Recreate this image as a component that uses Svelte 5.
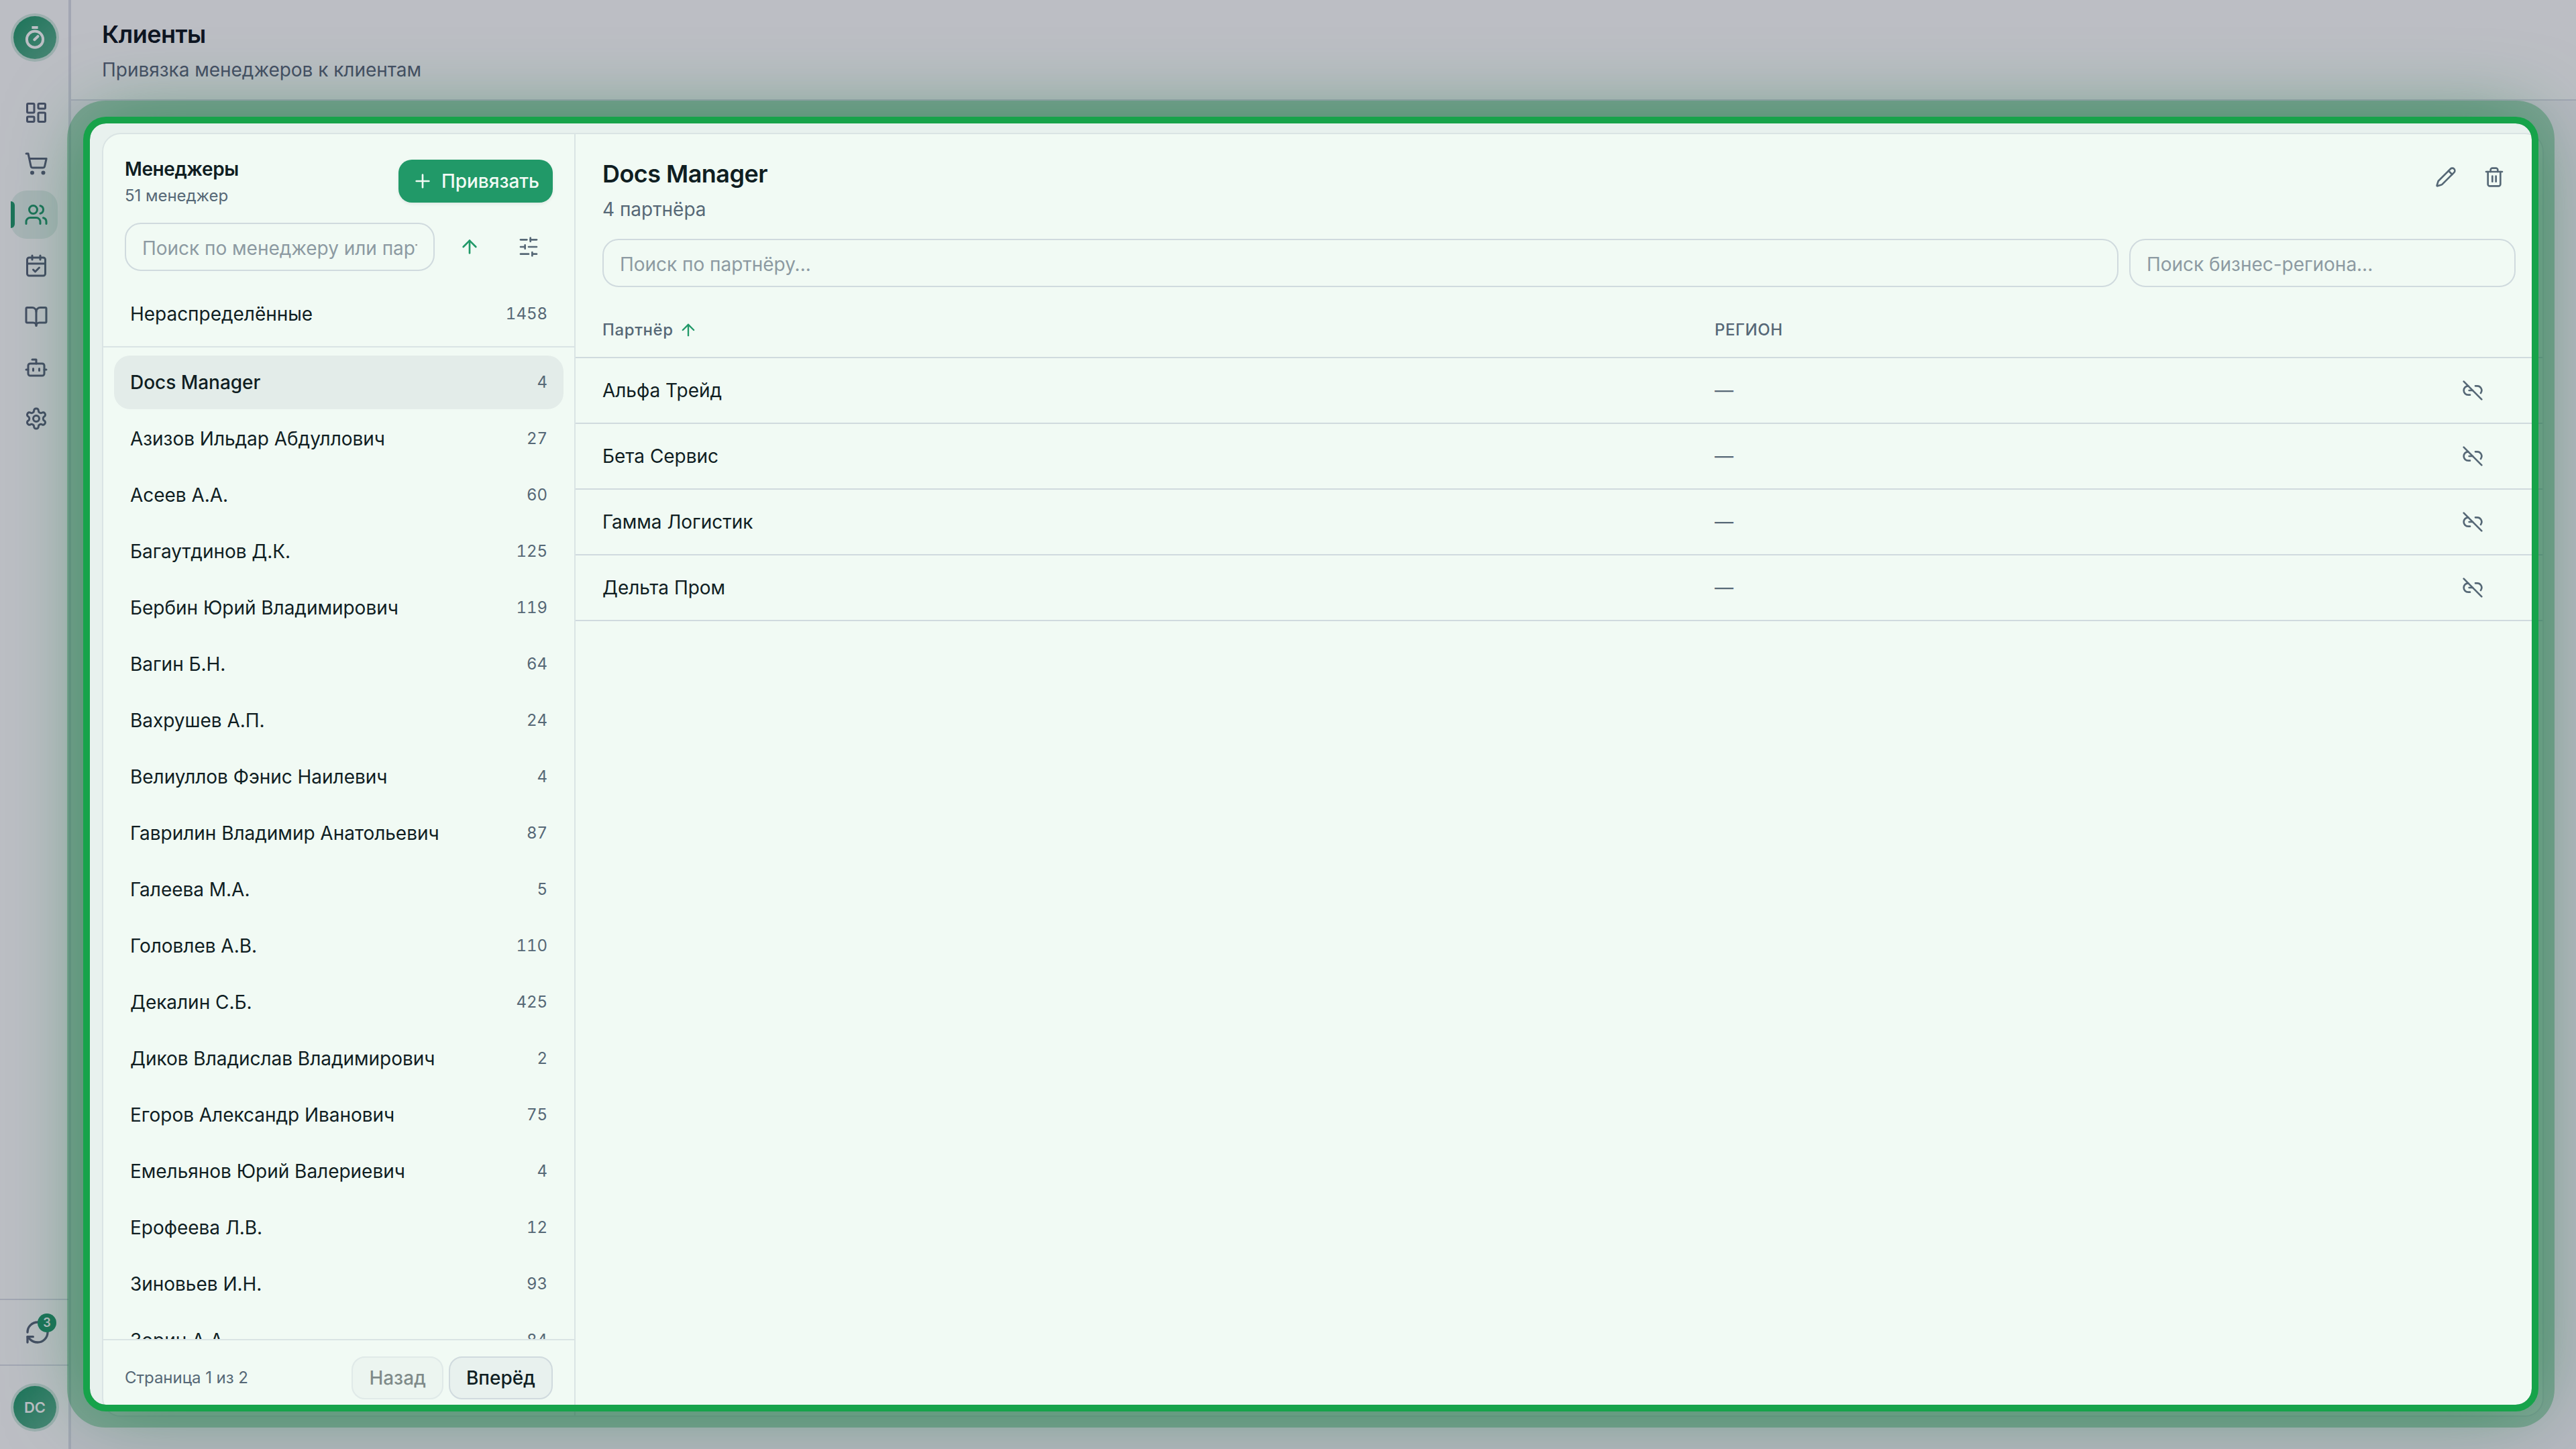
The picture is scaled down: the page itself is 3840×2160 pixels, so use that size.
<script lang="ts">
  interface Manager {
    name: string;
    count: number;
  }

  const icons: Record<string, string> = {
    dashboard:
      '<rect width="7" height="9" x="3" y="3" rx="1"/><rect width="7" height="5" x="14" y="3" rx="1"/><rect width="7" height="9" x="14" y="12" rx="1"/><rect width="7" height="5" x="3" y="16" rx="1"/>',
    cart: '<circle cx="8" cy="21" r="1"/><circle cx="19" cy="21" r="1"/><path d="M2.05 2.05h2l2.66 12.42a2 2 0 0 0 2 1.58h9.78a2 2 0 0 0 1.95-1.57l1.65-7.43H5.12"/>',
    users:
      '<path d="M16 21v-2a4 4 0 0 0-4-4H6a4 4 0 0 0-4 4v2"/><circle cx="9" cy="7" r="4"/><path d="M22 21v-2a4 4 0 0 0-3-3.87"/><path d="M16 3.13a4 4 0 0 1 0 7.75"/>',
    calendar:
      '<path d="M8 2v4"/><path d="M16 2v4"/><rect width="18" height="18" x="3" y="4" rx="2"/><path d="M3 10h18"/><path d="m9 16 2 2 4-4"/>',
    book: '<path d="M12 7v14"/><path d="M3 18a1 1 0 0 1-1-1V4a1 1 0 0 1 1-1h5a4 4 0 0 1 4 4 4 4 0 0 1 4-4h5a1 1 0 0 1 1 1v13a1 1 0 0 1-1 1h-6a3 3 0 0 0-3 3 3 3 0 0 0-3-3z"/>',
    bot: '<path d="M12 8V4H8"/><rect width="16" height="12" x="4" y="8" rx="2"/><path d="M2 14h2"/><path d="M20 14h2"/><path d="M15 13v2"/><path d="M9 13v2"/>',
    settings:
      '<path d="M12.22 2h-.44a2 2 0 0 0-2 2v.18a2 2 0 0 1-1 1.73l-.43.25a2 2 0 0 1-2 0l-.15-.08a2 2 0 0 0-2.73.73l-.22.38a2 2 0 0 0 .73 2.73l.15.1a2 2 0 0 1 1 1.72v.51a2 2 0 0 1-1 1.74l-.15.09a2 2 0 0 0-.73 2.73l.22.38a2 2 0 0 0 2.73.73l.15-.08a2 2 0 0 1 2 0l.43.25a2 2 0 0 1 1 1.73V20a2 2 0 0 0 2 2h.44a2 2 0 0 0 2-2v-.18a2 2 0 0 1 1-1.73l.43-.25a2 2 0 0 1 2 0l.15.08a2 2 0 0 0 2.73-.73l.22-.39a2 2 0 0 0-.73-2.73l-.15-.08a2 2 0 0 1-1-1.74v-.5a2 2 0 0 1 1-1.74l.15-.09a2 2 0 0 0 .73-2.73l-.22-.38a2 2 0 0 0-2.73-.73l-.15.08a2 2 0 0 1-2 0l-.43-.25a2 2 0 0 1-1-1.73V4a2 2 0 0 0-2-2z"/><circle cx="12" cy="12" r="3"/>',
    refresh:
      '<path d="M3 12a9 9 0 0 1 9-9 9.75 9.75 0 0 1 6.74 2.74L21 8"/><path d="M21 3v5h-5"/><path d="M21 12a9 9 0 0 1-9 9 9.75 9.75 0 0 1-6.74-2.74L3 16"/><path d="M8 16H3v5"/>',
    plus: '<path d="M5 12h14"/><path d="M12 5v14"/>',
    arrowUp: '<path d="m5 12 7-7 7 7"/><path d="M12 19V5"/>',
    sliders:
      '<path d="M21 4h-7"/><path d="M10 4H3"/><path d="M21 12h-9"/><path d="M8 12H3"/><path d="M21 20h-5"/><path d="M12 20H3"/><path d="M14 2v4"/><path d="M8 10v4"/><path d="M16 18v4"/>',
    pencil:
      '<path d="M21.174 6.812a1 1 0 0 0-3.986-3.987L3.842 16.174a2 2 0 0 0-.5.83l-1.321 4.352a.5.5 0 0 0 .623.622l4.353-1.32a2 2 0 0 0 .83-.497z"/><path d="m15 5 4 4"/>',
    trash:
      '<path d="M3 6h18"/><path d="M19 6v14c0 1-1 2-2 2H7c-1 0-2-1-2-2V6"/><path d="M8 6V4c0-1 1-2 2-2h4c1 0 2 1 2 2v2"/><path d="M10 11v6"/><path d="M14 11v6"/>',
    unlink:
      '<path d="M9 17H7A5 5 0 0 1 7 7"/><path d="M15 7h2a5 5 0 0 1 4 8"/><path d="M8 12h4"/><path d="m2 2 20 20"/>'
  };

  const nav = ['dashboard', 'cart', 'users', 'calendar', 'book', 'bot', 'settings'];
  const activeNav = 'users';

  const managers: Manager[] = [
    { name: 'Docs Manager', count: 4 },
    { name: 'Азизов Ильдар Абдуллович', count: 27 },
    { name: 'Асеев А.А.', count: 60 },
    { name: 'Багаутдинов Д.К.', count: 125 },
    { name: 'Бербин Юрий Владимирович', count: 119 },
    { name: 'Вагин Б.Н.', count: 64 },
    { name: 'Вахрушев А.П.', count: 24 },
    { name: 'Велиуллов Фэнис Наилевич', count: 4 },
    { name: 'Гаврилин Владимир Анатольевич', count: 87 },
    { name: 'Галеева М.А.', count: 5 },
    { name: 'Головлев А.В.', count: 110 },
    { name: 'Декалин С.Б.', count: 425 },
    { name: 'Диков Владислав Владимирович', count: 2 },
    { name: 'Егоров Александр Иванович', count: 75 },
    { name: 'Емельянов Юрий Валериевич', count: 4 },
    { name: 'Ерофеева Л.В.', count: 12 },
    { name: 'Зиновьев И.Н.', count: 93 },
    { name: 'Зорин А.А.', count: 84 }
  ];

  const partners = ['Альфа Трейд', 'Бета Сервис', 'Гамма Логистик', 'Дельта Пром'];

  let selected = $state('Docs Manager');
</script>

{#snippet icon(name: string, size: number)}
  <svg
    width={size}
    height={size}
    viewBox="0 0 24 24"
    fill="none"
    stroke="currentColor"
    stroke-width="2"
    stroke-linecap="round"
    stroke-linejoin="round"
    aria-hidden="true"
  >
    {@html icons[name]}
  </svg>
{/snippet}

<div class="app">
  <aside class="sidebar">
    <div class="brand">
      <span class="disc">
        <svg width="64" height="64" fill="none" stroke="currentColor" stroke-width="4" aria-hidden="true">
          <circle cx="32" cy="34.7" r="12.1" />
          <path d="M31.3 35.2l5.2-5" stroke-linecap="round" />
          <path d="M27.4 17h9.2" />
        </svg>
      </span>
    </div>
    <nav class="nav">
      {#each nav as item}
        <button class="nav-item" class:active={item === activeNav} aria-label={item}>
          {@render icon(item, 36)}
        </button>
      {/each}
    </nav>
    <div class="sync">
      {@render icon('refresh', 40)}
      <span class="badge">3</span>
    </div>
    <div class="profile">
      <span class="disc initials">DC</span>
    </div>
  </aside>

  <div class="main">
    <header class="header">
      <h1>Клиенты</h1>
      <p>Привязка менеджеров к клиентам</p>
    </header>

    <div class="content">
      <div class="card">
        <section class="managers">
          <div class="managers-head">
            <div>
              <h2>Менеджеры</h2>
              <p>51 менеджер</p>
            </div>
            <button class="btn-primary">{@render icon('plus', 32)}Привязать</button>
          </div>
          <div class="managers-search">
            <input type="text" placeholder="Поиск по менеджеру или партнёру..." />
            <button class="btn-icon accent" aria-label="sort">{@render icon('arrowUp', 32)}</button>
            <button class="btn-icon" aria-label="filter">{@render icon('sliders', 32)}</button>
          </div>
          <div class="unassigned">
            <button class="row">
              <span>Нераспределённые</span>
              <span class="count">1458</span>
            </button>
          </div>
          <div class="list">
            {#each managers as manager}
              <button
                class="row"
                class:selected={manager.name === selected}
                onclick={() => (selected = manager.name)}
              >
                <span>{manager.name}</span>
                <span class="count">{manager.count}</span>
              </button>
            {/each}
          </div>
          <footer class="pager">
            <span>Страница 1 из 2</span>
            <div class="pager-buttons">
              <button class="btn" disabled>Назад</button>
              <button class="btn">Вперёд</button>
            </div>
          </footer>
        </section>

        <section class="partners">
          <div class="partners-head">
            <div>
              <h2>{selected}</h2>
              <p>4 партнёра</p>
            </div>
            <div class="actions">
              <button class="btn-icon" aria-label="edit">{@render icon('pencil', 32)}</button>
              <button class="btn-icon" aria-label="delete">{@render icon('trash', 32)}</button>
            </div>
          </div>
          <div class="partners-search">
            <input type="text" placeholder="Поиск по партнёру..." />
            <input class="region" type="text" placeholder="Поиск бизнес-региона..." />
          </div>
          <div class="table">
            <div class="tr th">
              <span class="sort">Партнёр {@render icon('arrowUp', 28)}</span>
              <span>РЕГИОН</span>
              <span></span>
            </div>
            {#each partners as partner}
              <div class="tr">
                <span>{partner}</span>
                <span class="muted">—</span>
                <button class="btn-icon" aria-label="unlink">{@render icon('unlink', 32)}</button>
              </div>
            {/each}
          </div>
        </section>
      </div>
    </div>
  </div>

  <div class="spotlight"></div>
</div>

<style>
  :global(body) {
    margin: 0;
    overflow: hidden;
  }

  .app {
    --fg: #10161f;
    --muted: #5b647a;
    --primary: #22986b;
    --border: #dcdee8;
    --line: #e7e8ee;
    --page: #f6f6f9;
    position: relative;
    display: flex;
    width: 3840px;
    height: 2160px;
    overflow: hidden;
    background: var(--page);
    color: var(--fg);
    font-family: Inter, 'Liberation Sans', sans-serif;
    font-size: 28px;
    letter-spacing: -0.03px;
    line-height: 40px;
  }

  .app * {
    box-sizing: border-box;
  }

  h1,
  h2,
  p {
    margin: 0;
  }

  h1,
  h2 {
    font-weight: 600;
    letter-spacing: -0.015em;
  }

  button,
  input {
    font: inherit;
    letter-spacing: inherit;
    color: inherit;
    border: 0;
    background: none;
    padding: 0;
  }

  svg {
    display: block;
    flex: none;
  }

  .sidebar {
    display: flex;
    flex-direction: column;
    width: 106px;
    border-right: 4px solid var(--border);
    background: #fff;
    color: var(--muted);
  }

  .brand {
    height: 132px;
    padding: 24px 0 0 20px;
  }

  .disc {
    display: flex;
    align-items: center;
    justify-content: center;
    width: 64px;
    height: 64px;
    border-radius: 50%;
    background: linear-gradient(135deg, #22986b, #62b393);
    box-shadow: 0 0 0 4px #d3eae1;
    color: #fff;
  }

  .initials {
    font-size: 22px;
    font-weight: 600;
  }

  .nav {
    display: flex;
    flex: 1;
    flex-direction: column;
    gap: 4px;
    padding: 0 16px;
  }

  .nav-item {
    position: relative;
    display: flex;
    align-items: center;
    justify-content: center;
    width: 70px;
    height: 72px;
    padding-left: 6px;
    border-radius: 24px;
  }

  .nav-item.active {
    background: #e4f1ec;
    color: var(--primary);
  }

  .nav-item.active::before {
    content: '';
    position: absolute;
    left: 0;
    top: 16px;
    width: 6px;
    height: 40px;
    border-radius: 0 6px 6px 0;
    background: var(--primary);
  }

  .sync {
    position: relative;
    display: flex;
    align-items: center;
    justify-content: center;
    height: 98px;
    padding-left: 10px;
    border-top: 2px solid var(--border);
  }

  .badge {
    position: absolute;
    left: 56px;
    top: 20px;
    width: 28px;
    height: 28px;
    border-radius: 50%;
    background: var(--primary);
    color: #fff;
    font-size: 18px;
    font-weight: 600;
    line-height: 28px;
    text-align: center;
  }

  .profile {
    height: 126px;
    padding: 30px 0 0 20px;
    border-top: 2px solid var(--border);
  }

  .main {
    display: flex;
    flex: 1;
    flex-direction: column;
    min-width: 0;
  }

  .header {
    height: 150px;
    padding: 27px 46px 0;
    border-bottom: 2px solid var(--border);
    background: #fff;
  }

  .header h1 {
    font-size: 36px;
    line-height: 48px;
  }

  .header p {
    margin-top: 9px;
    color: var(--muted);
  }

  .content {
    flex: 1;
    padding: 48px 48px 48px 46px;
  }

  .card {
    display: flex;
    height: 1914px;
    overflow: hidden;
    border: 2px solid var(--line);
    border-radius: 28px;
    background: #fff;
  }

  .managers {
    display: flex;
    flex-direction: column;
    width: 704px;
    border-right: 2px solid var(--line);
  }

  .managers-head {
    display: flex;
    align-items: center;
    justify-content: space-between;
    padding: 32px 32px 0;
    height: 108px;
  }

  .managers-head h2 {
    font-size: 28px;
    line-height: 40px;
  }

  .managers-head p {
    margin-top: 2px;
    margin-bottom: -2px;
    color: var(--muted);
    font-size: 24px;
    line-height: 36px;
  }

  .btn-primary {
    display: flex;
    align-items: center;
    gap: 12px;
    height: 64px;
    padding: 0 20px;
    border-radius: 20px;
    background: var(--primary);
    box-shadow: 0 2px 4px rgba(15, 23, 42, 0.08);
    color: #fff;
    font-weight: 500;
  }

  .managers-search {
    display: flex;
    align-items: center;
    gap: 16px;
    padding: 24px 32px 0;
  }

  input {
    flex: 1;
    min-width: 0;
    height: 72px;
    padding: 4px 24px 0;
    border: 2px solid var(--border);
    border-radius: 24px;
  }

  input::placeholder {
    color: var(--muted);
    opacity: 0.65;
  }

  .btn-icon {
    display: flex;
    align-items: center;
    justify-content: center;
    width: 72px;
    height: 72px;
    color: var(--muted);
  }

  .btn-icon.accent {
    color: var(--primary);
  }

  .unassigned {
    height: 114px;
    padding: 24px 16px 0;
    border-bottom: 2px solid var(--line);
  }

  .list {
    display: flex;
    flex: 1;
    flex-direction: column;
    gap: 4px;
    min-height: 0;
    overflow: hidden;
    padding: 12px 16px;
  }

  .row {
    display: flex;
    flex: none;
    align-items: center;
    justify-content: space-between;
    width: 100%;
    height: 80px;
    padding: 0 24px;
    border-radius: 24px;
    text-align: left;
  }

  .row.selected {
    background: #f1f1f4;
    font-weight: 500;
  }

  .count {
    color: var(--muted);
    font-size: 24px;
    font-weight: 400;
    font-variant-numeric: tabular-nums;
  }

  .pager {
    display: flex;
    align-items: center;
    justify-content: space-between;
    height: 114px;
    padding: 0 32px;
    border-top: 2px solid var(--line);
    color: var(--muted);
    font-size: 24px;
  }

  .pager-buttons {
    display: flex;
    gap: 8px;
  }

  .btn {
    height: 64px;
    padding: 0 24px;
    border: 2px solid var(--border);
    border-radius: 20px;
    background: var(--page);
    color: var(--fg);
    font-size: 28px;
    font-weight: 500;
  }

  .btn:disabled {
    opacity: 0.5;
  }

  .partners {
    display: flex;
    flex: 1;
    flex-direction: column;
    min-width: 0;
  }

  .partners-head {
    display: flex;
    justify-content: space-between;
    padding: 32px 40px 0;
    height: 156px;
  }

  .partners-head h2 {
    margin-top: -1px;
    font-size: 36px;
    line-height: 56px;
  }

  .partners-head p {
    margin-top: 5px;
    color: var(--muted);
  }

  .actions {
    display: flex;
    gap: 8px;
  }

  .actions .btn-icon {
    width: 64px;
    height: 64px;
  }

  .partners-search {
    display: flex;
    gap: 16px;
    padding: 0 40px;
  }

  .partners-search .region {
    flex: 0 0 576px;
  }

  .table {
    padding-top: 22px;
  }

  .tr {
    display: grid;
    grid-template-columns: 1658px 1fr 64px;
    align-items: center;
    height: 98px;
    padding: 0 72px 0 40px;
    border-bottom: 2px solid var(--border);
  }

  .tr .btn-icon {
    width: 64px;
  }

  .th {
    height: 84px;
    padding-top: 2px;
    color: var(--muted);
    font-size: 24px;
    font-weight: 500;
    letter-spacing: 0.6px;
  }

  .sort {
    display: flex;
    align-items: center;
    gap: 8px;
  }

  .sort svg {
    color: var(--primary);
  }

  .muted {
    color: var(--muted);
  }

  /* dimmed page with a highlighted window over the card */
  .spotlight {
    position: absolute;
    left: 134px;
    top: 184px;
    width: 3640px;
    height: 1910px;
    border-radius: 24px;
    background: rgba(22, 163, 74, 0.06);
    box-shadow:
      0 0 0 10px #16a34a,
      0 0 0 4000px rgba(15, 23, 42, 0.28),
      0 0 0 34px rgba(22, 163, 74, 0.35),
      0 0 120px rgba(22, 163, 74, 0.6);
    pointer-events: none;
  }
</style>
